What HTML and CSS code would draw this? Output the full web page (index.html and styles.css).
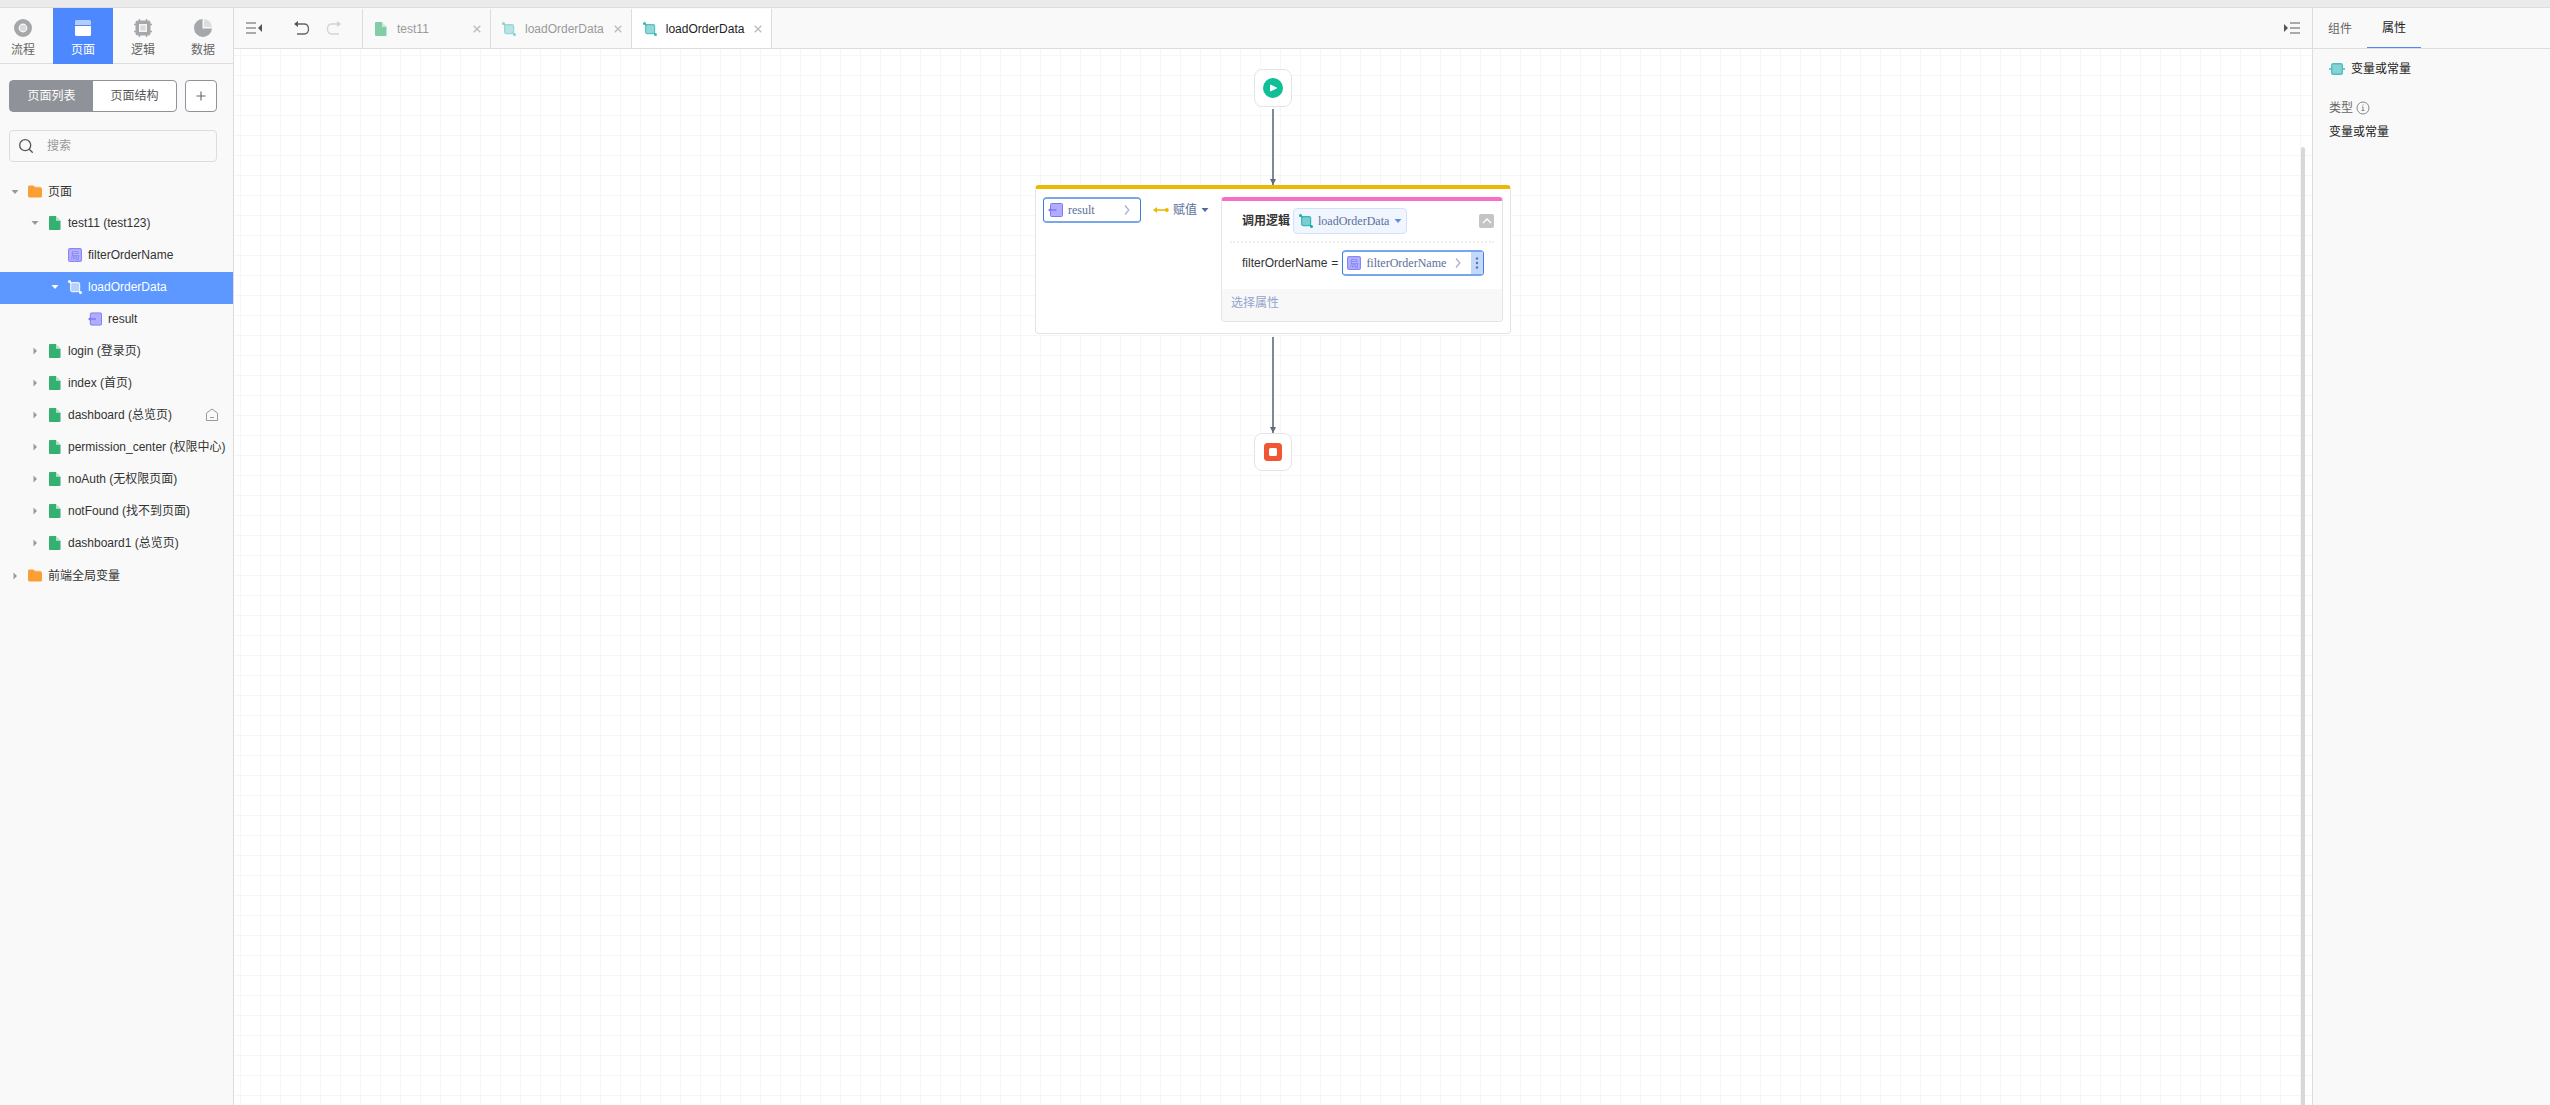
FILE: index.html
```html
<!DOCTYPE html>
<html lang="zh-CN">
<head>
<meta charset="utf-8">
<title>loadOrderData</title>
<link rel="stylesheet" href="styles.css">
</head>
<body>
<svg class="defs" aria-hidden="true">
  <symbol id="i-file" viewBox="0 0 14 14"><path d="M1 1Q1 0 2 0h6v4.500H12.500V13q0 1-1 1H2q-1 0-1-1z" fill="#34b070"/><path d="M8 0l4.500 4.500H8z" fill="#aee0c5"/></symbol>
  <symbol id="i-folder" viewBox="0 0 14 14"><path d="M7 1.500h5q1 0 1 1v3H7z" fill="#fcd3a0"/><path d="M0 2q0-1.500 1.500-1.500h4L7.500 2.500H12.500Q14 2.500 14 4v7q0 1.500-1.500 1.500h-11Q0 12.500 0 11z" fill="#fa9f35"/></symbol>
  <symbol id="i-local" viewBox="0 0 14 14"><rect x=".6" y=".6" width="12.800" height="12.800" rx="1.500" fill="#b5b3ff" stroke="#8a87fa" stroke-width="1.200"/><text x="7" y="10.500" class="glyph">局</text></symbol>
  <symbol id="i-out" viewBox="0 0 15 14"><rect x="2.500" y=".5" width="12" height="13" rx="1" fill="#b0adff" stroke="#7d79f7"/><path d="M0 7l3-2.500v5zM3 6.300h5.500v1.400H3z" fill="#7d79f7"/></symbol>
  <symbol id="i-logic" viewBox="0 0 14 14"><path d="M1.500 1.500l2 2M11 11l1.500 1.500" stroke="currentColor" stroke-width="1.200"/><rect x="2.600" y="2.600" width="9" height="9" rx="1.500" fill="currentColor" fill-opacity=".55" stroke="currentColor" stroke-opacity=".8" stroke-width="1.200"/><circle cx="1.500" cy="1.500" r="1.500" fill="currentColor"/><circle cx="12.500" cy="12.500" r="1.500" fill="currentColor"/></symbol>
  <symbol id="i-close" viewBox="0 0 8 8"><path d="M.7.7l6.600 6.600M7.300.7L.7 7.300" stroke="#bbb" stroke-width="1.300"/></symbol>
  <symbol id="i-down" viewBox="0 0 8 8"><path d="M.5 2h7L4 6z" fill="currentColor"/></symbol>
  <symbol id="i-right" viewBox="0 0 8 8"><path d="M2.500.500v7L6 4z" fill="currentColor"/></symbol>
  <symbol id="i-chev" viewBox="0 0 6 10"><path d="M1 .5L4.800 5 1 9.500" fill="none" stroke="#a9b2cc" stroke-width="1.300"/></symbol>
  <symbol id="i-arrow" viewBox="0 0 6 6"><path d="M0 0h6L3 6z" fill="#626c7e"/></symbol>
</svg>

<header class="strip"></header>
<div class="app">
  <aside class="side">
    <nav class="modes">
      <button class="mode"><svg width="18" height="18" viewBox="0 0 18 18"><circle cx="9" cy="9" r="6.700" fill="none" stroke="#a5a7ab" stroke-width="4.600"/><circle cx="9" cy="9" r="3.200" fill="#d9dadc"/></svg>流程</button>
      <button class="mode on"><svg width="18" height="18" viewBox="0 0 18 18"><path d="M1 6V2.500Q1 1 2.500 1h13Q17 1 17 2.500V6z" fill="#b3cdff"/><path d="M1 7h16v8.500q0 1.500-1.500 1.500h-13Q1 17 1 15.500z" fill="#fff"/></svg>页面</button>
      <button class="mode"><svg width="18" height="18" viewBox="0 0 18 18"><path d="M5.500 0v18M12.500 0v18M0 5.500h18M0 12.500h18" stroke="#a5a7ab" stroke-width="1.500"/><rect x="1.500" y="1.500" width="15" height="15" rx="2" fill="#a5a7ab"/><rect x="5" y="5" width="8" height="8" fill="#f4f4f4"/><rect x="6.500" y="6.500" width="5" height="5" fill="#d9dadc"/></svg>逻辑</button>
      <button class="mode"><svg width="18" height="18" viewBox="0 0 18 18"><path d="M8.500 0v9.500H18A9 9 0 1 1 8.500 0z" fill="#a5a7ab"/><path d="M10 0a8.500 8.500 0 0 1 8 8h-8z" fill="#dcdddf"/></svg>数据</button>
    </nav>
    <div class="switch">
      <div class="segment"><button class="seg on">页面列表</button><button class="seg">页面结构</button></div>
      <button class="add" aria-label="添加"><svg width="10" height="10" viewBox="0 0 10 10"><path d="M5 .5v9M.5 5h9" stroke="#666" stroke-width="1.100"/></svg></button>
    </div>
    <label class="search">
      <svg width="14" height="14" viewBox="0 0 14 14" fill="none" stroke="#555" stroke-width="1.300"><circle cx="6.200" cy="6.200" r="5.500"/><path d="M10.200 10.200l3.500 3.500"/></svg>
      <input type="text" placeholder="搜索" aria-label="搜索">
    </label>
    <ul class="tree">
      <li class="row"><svg class="tw"><use href="#i-down"/></svg><svg class="ic"><use href="#i-folder"/></svg>页面</li>
      <li class="row l1"><svg class="tw"><use href="#i-down"/></svg><svg class="ic"><use href="#i-file"/></svg>test11 (test123)</li>
      <li class="row l2"><svg class="tw"></svg><svg class="ic"><use href="#i-local"/></svg>filterOrderName</li>
      <li class="row l2 on"><svg class="tw"><use href="#i-down"/></svg><svg class="ic"><use href="#i-logic"/></svg>loadOrderData</li>
      <li class="row l3"><svg class="tw"></svg><svg class="ic"><use href="#i-out"/></svg>result</li>
      <li class="row l1"><svg class="tw"><use href="#i-right"/></svg><svg class="ic"><use href="#i-file"/></svg>login (登录页)</li>
      <li class="row l1"><svg class="tw"><use href="#i-right"/></svg><svg class="ic"><use href="#i-file"/></svg>index (首页)</li>
      <li class="row l1"><svg class="tw"><use href="#i-right"/></svg><svg class="ic"><use href="#i-file"/></svg>dashboard (总览页)<svg class="home" viewBox="0 0 14 14" fill="none" stroke="#999"><path d="M1.500 5L7 1l5.500 4v7.500h-11zM5 9.500h4"/></svg></li>
      <li class="row l1"><svg class="tw"><use href="#i-right"/></svg><svg class="ic"><use href="#i-file"/></svg>permission_center (权限中心)</li>
      <li class="row l1"><svg class="tw"><use href="#i-right"/></svg><svg class="ic"><use href="#i-file"/></svg>noAuth (无权限页面)</li>
      <li class="row l1"><svg class="tw"><use href="#i-right"/></svg><svg class="ic"><use href="#i-file"/></svg>notFound (找不到页面)</li>
      <li class="row l1"><svg class="tw"><use href="#i-right"/></svg><svg class="ic"><use href="#i-file"/></svg>dashboard1 (总览页)</li>
      <li class="row"><svg class="tw"><use href="#i-right"/></svg><svg class="ic"><use href="#i-folder"/></svg>前端全局变量</li>
    </ul>
  </aside>

  <main class="work">
    <div class="bar">
      <div class="tools">
        <button class="tool" aria-label="收起左栏"><svg width="16" height="14" viewBox="0 0 16 14"><path d="M0 2h10M0 7h10M0 12h10" stroke="#aaa" stroke-width="2"/><path d="M16 3v8l-4-4z" fill="#555"/></svg></button>
        <button class="tool" aria-label="撤销"><svg width="16" height="14" viewBox="0 0 16 14"><path d="M3 3h7q4.500 0 4.500 5T10 13H3" fill="none" stroke="#666" stroke-width="1.300"/><path d="M0 3l4-3v6z" fill="#555"/></svg></button>
        <button class="tool redo" aria-label="重做"><svg width="16" height="14" viewBox="0 0 16 14"><path d="M12 3H6Q1.500 3 1.500 8T6 13h7" fill="none" stroke="#d4d4d4" stroke-width="1.300"/><path d="M15 3l-4-3v6z" fill="#d0d0d0"/></svg></button>
      </div>
      <div class="tab dim"><svg class="ic"><use href="#i-file"/></svg><span>test11</span><button class="x" aria-label="关闭"><svg><use href="#i-close"/></svg></button></div>
      <div class="tab dim"><svg class="ic"><use href="#i-logic"/></svg><span>loadOrderData</span><button class="x" aria-label="关闭"><svg><use href="#i-close"/></svg></button></div>
      <div class="tab on"><svg class="ic"><use href="#i-logic"/></svg><span>loadOrderData</span><button class="x" aria-label="关闭"><svg><use href="#i-close"/></svg></button></div>
      <button class="tool fold" aria-label="收起右栏"><svg width="16" height="14" viewBox="0 0 16 14"><path d="M6 2h10M6 7h10M6 12h10" stroke="#aaa" stroke-width="2"/><path d="M0 3v8l4-4z" fill="#555"/></svg></button>
    </div>
    <div class="canvas">
      <div class="flow">
        <div class="node"><svg width="20" height="20" viewBox="0 0 20 20"><circle cx="10" cy="10" r="10" fill="#0fbf96"/><path d="M7.500 7l6 3-6 3z" fill="#fff" stroke="#fff" stroke-linejoin="round"/></svg></div>
        <div class="link in"><svg><use href="#i-arrow"/></svg></div>
        <section class="assign">
          <div class="box target"><svg class="ic wide"><use href="#i-out"/></svg><span>result</span><svg class="chev"><use href="#i-chev"/></svg></div>
          <button class="op"><svg width="16" height="8" viewBox="0 0 16 8"><path d="M2 4h12" stroke="#ebba00" stroke-width="1.600"/><path d="M0 4l4-3v6z" fill="#ebba00"/><circle cx="13.800" cy="4" r="2" fill="#ebba00"/></svg><span>赋值</span><svg class="caret"><use href="#i-down"/></svg></button>
          <section class="call">
            <div class="head"><b>调用逻辑</b><button class="chip"><svg class="ic"><use href="#i-logic"/></svg><span>loadOrderData</span><svg class="caret"><use href="#i-down"/></svg></button>
              <button class="up" aria-label="收起"><svg width="10" height="6" viewBox="0 0 10 6"><path d="M1 5l4-4 4 4" fill="none" stroke="#fff" stroke-width="1.300"/></svg></button></div>
            <div class="param"><span>filterOrderName</span><span>=</span>
              <div class="box value"><svg class="ic"><use href="#i-local"/></svg><span>filterOrderName</span><svg class="chev"><use href="#i-chev"/></svg><button class="more" aria-label="更多"><svg width="4" height="12" viewBox="0 0 4 12" fill="#5a76a8"><circle cx="2" cy="1.500" r="1.200"/><circle cx="2" cy="6" r="1.200"/><circle cx="2" cy="10.500" r="1.200"/></svg></button></div></div>
            <footer class="pick">选择属性</footer>
          </section>
        </section>
        <div class="link out"><svg><use href="#i-arrow"/></svg></div>
        <div class="node"><svg width="18" height="18" viewBox="0 0 18 18"><rect width="18" height="18" rx="3.500" fill="#f15533"/><rect x="5" y="5" width="8" height="8" rx="1.500" fill="#fff"/></svg></div>
      </div>
      <div class="scroll"></div>
    </div>
  </main>

  <aside class="props">
    <nav class="ptabs"><button class="ptab">组件</button><button class="ptab on">属性</button></nav>
    <h2 class="title"><svg width="16" height="14" viewBox="0 0 16 14"><path d="M0 7h16" stroke="#6fcaca" stroke-width="2"/><rect x="2.700" y="1.700" width="10.600" height="10.600" rx="1.500" fill="#87d3d3" stroke="#4dc0c0" stroke-width="1.400"/></svg>变量或常量</h2>
    <dl class="info">
      <dt>类型<svg width="14" height="14" viewBox="0 0 14 14" fill="none" stroke="#888"><circle cx="7" cy="7" r="6"/><path d="M7 3.500v1M6 6h1v3.500M5.500 9.500h3"/></svg></dt>
      <dd>变量或常量</dd>
    </dl>
  </aside>
</div>
</body>
</html>
```
FILE: styles.css
```css
* { box-sizing: border-box; }
body {
  margin: 0;
  height: 100vh;
  display: flex;
  flex-direction: column;
  font: 12px/16px "Liberation Sans", "Noto Sans CJK SC", sans-serif;
  color: #333;
  background: #f9f9f9;
}
button {
  font: inherit;
  color: inherit;
  background: none;
  border: 0;
  padding: 0;
  display: flex;
  align-items: center;
  justify-content: center;
}
svg { display: block; flex: none; }
.defs { display: none; }
.ic { width: 14px; height: 14px; }
.ic.wide { width: 15px; }
.glyph { font: 9px "Noto Sans CJK SC", sans-serif; fill: #7673f3; text-anchor: middle; }
.strip { flex: none; height: 8px; background: #ebebeb; border-bottom: 1px solid #ddd; }
.app { flex: 1; min-height: 0; display: flex; }

/* left panel */
.side { flex: none; width: 234px; border-right: 1px solid #ddd; }
.modes {
  display: flex;
  justify-content: flex-end;
  overflow: hidden;
  height: 56px;
  box-shadow: inset 0 -1px #ddd;
}
.mode { flex: none; width: 60px; flex-direction: column; gap: 5px; padding-top: 4px; color: #666; }
.mode.on { background: #4d88ff; color: #fff; }
.switch { display: flex; gap: 8px; padding: 16px 16px 0 9px; }
.segment { flex: 1; display: flex; border: 1px solid #8f9298; border-radius: 4px; background: #fff; }
.seg { flex: 1; height: 30px; color: #555; }
.seg.on { background: #8f9298; color: #fff; }
.add { width: 32px; border: 1px solid #8f9298; border-radius: 4px; background: #fff; }
.search {
  display: flex;
  align-items: center;
  gap: 14px;
  height: 32px;
  margin: 18px 16px 14px 9px;
  padding: 0 9px;
  border: 1px solid #ddd;
  border-radius: 4px;
}
.search input { flex: 1; min-width: 0; border: 0; padding: 0; background: none; font: inherit; outline: 0; }
.search input::placeholder { color: #999; }
.tree { list-style: none; margin: 0; padding: 0; }
.row { display: flex; align-items: center; gap: 6px; height: 32px; padding-left: 11px; white-space: nowrap; }
.row .tw { width: 8px; height: 8px; margin-right: 3px; color: #999; }
.row.l1, .row.l2, .row.l3 { padding-bottom: 2px; }
.row.l1 { padding-left: 31px; }
.row.l2 { padding-left: 51px; }
.row.l3 { padding-left: 71px; }
.row.on { background: #5c98ff; color: #fff; }
.row.on .tw { color: #fff; }
.home { width: 14px; height: 14px; margin: 0 14px 0 auto; }

/* work area */
.work { flex: 1; min-width: 0; display: flex; flex-direction: column; }
.bar { flex: none; display: flex; height: 41px; border-bottom: 1px solid #ddd; }
.tools { display: flex; width: 128px; padding-left: 12px; }
.tool { width: 16px; }
.tool + .tool { margin-left: 32px; }
.tool + .redo { margin-left: 16px; }
.tab {
  display: flex;
  align-items: center;
  min-width: 128px;
  margin-top: 1px;
  padding: 0 9px 0 11px;
  border-left: 1px solid #ddd;
  color: #999;
}
.tab > span { margin: 0 10px 0 9px; }
.tab .ic { color: #3bb8b8; }
.tab.dim .ic { opacity: .6; }
.tab.on { background: #fff; color: #222; border-right: 1px solid #ddd; }
.x { margin-left: auto; }
.x svg { width: 8px; height: 8px; }
.fold { margin: 0 12px 0 auto; }
.canvas {
  flex: 1;
  display: flex;
  position: relative;
  background-color: #fff;
  background-image: linear-gradient(#f6f6f6 1px, transparent 1px), linear-gradient(90deg, #f6f6f6 1px, transparent 1px);
  background-size: 20px 20px;
  background-position: 6px 6px;
}
.scroll { position: absolute; right: 7px; top: 98px; bottom: 0; width: 4px; background: #d8d8d8; border-radius: 2px 2px 0 0; }
.flow { flex: 1; display: flex; flex-direction: column; align-items: center; padding-top: 20px; }
.node {
  display: flex;
  align-items: center;
  justify-content: center;
  width: 38px;
  height: 38px;
  background: #fff;
  border: 1px solid #e4e4e4;
  border-radius: 8px;
}
.link { display: flex; flex-direction: column; justify-content: flex-end; align-items: center; width: 6px; background: linear-gradient(#808896, #808896) center / 2px 100% no-repeat; }
.link svg { width: 6px; height: 6px; }
.link.in { height: 76px; margin-top: 2px; }
.link.out { height: 96px; margin-top: 3px; }
.assign {
  display: flex;
  align-items: flex-start;
  background: #fff;
  border: 1px solid #e4e4e4;
  border-top: 4px solid #ebba00;
  border-radius: 4px;
  padding: 8px 7px 11px;
}
.box {
  display: flex;
  align-items: center;
  height: 26px;
  padding: 0 4px;
  border: solid #78a6ea;
  border-width: 2px 1px;
  border-left-color: #3a7fe0;
  border-right-color: #3a7fe0;
  border-radius: 4px;
  background: #fff;
  font-family: "Liberation Serif", "Noto Sans CJK SC", serif;
  color: #5b6f9c;
}
.box > span { margin-left: 5px; }
.chev { width: 6px; height: 10px; }
.target { width: 98px; }
.target .chev { margin: 0 6px 0 auto; }
.op { height: 26px; margin: 0 12px; gap: 4px; color: #5b6f9c; }
.caret { width: 8px; height: 8px; color: #4f6a9c; }
.call { width: 282px; border: 1px solid #e4e4e4; border-top: 4px solid #f76ec9; border-radius: 4px; }
.head { display: flex; align-items: center; gap: 3px; margin: 0 8px; padding: 7px 0 7px 12px; border-bottom: 2px dotted #eee; }
.head b { color: #333; }
.chip {
  height: 26px;
  padding: 0 4px 0 5px;
  gap: 5px;
  background: #f0f5fe;
  border: 1px solid #d3e2fb;
  border-radius: 4px;
  color: #5b6f9c;
  font-family: "Liberation Serif", "Noto Sans CJK SC", serif;
}
.chip .ic { color: #17adad; }
.chip .caret { color: #5c92dc; }
.up { width: 15px; height: 14px; margin-left: auto; background: #c4c4c4; border-radius: 2px; }
.param { display: flex; align-items: center; gap: 4px; padding: 7px 0 13px 20px; }
.value { width: 142px; padding-right: 0; }
.value .chev { margin-left: 9px; }
.more { width: 12px; height: 100%; margin-left: auto; background: #c2d9fb; }
.pick { height: 32px; padding: 6px 9px; background: #f8f8f8; color: #93a5cb; border-radius: 0 0 4px 4px; }

/* right panel */
.props { flex: none; width: 238px; border-left: 1px solid #ddd; }
.ptabs { display: flex; height: 41px; border-bottom: 1px solid #ddd; }
.ptab { width: 54px; padding-top: 1px; color: #666; }
.ptab.on { color: #222; border-bottom: 1px solid #4d88ff; }
.title { display: flex; align-items: center; gap: 6px; margin: 12px 16px 23px; font-size: 12px; font-weight: 400; color: #222; }
.info { margin: 0 16px; }
.info dt { display: flex; align-items: center; gap: 3px; margin-bottom: 8px; color: #666; }
.info dd { margin: 0; color: #222; }
```
